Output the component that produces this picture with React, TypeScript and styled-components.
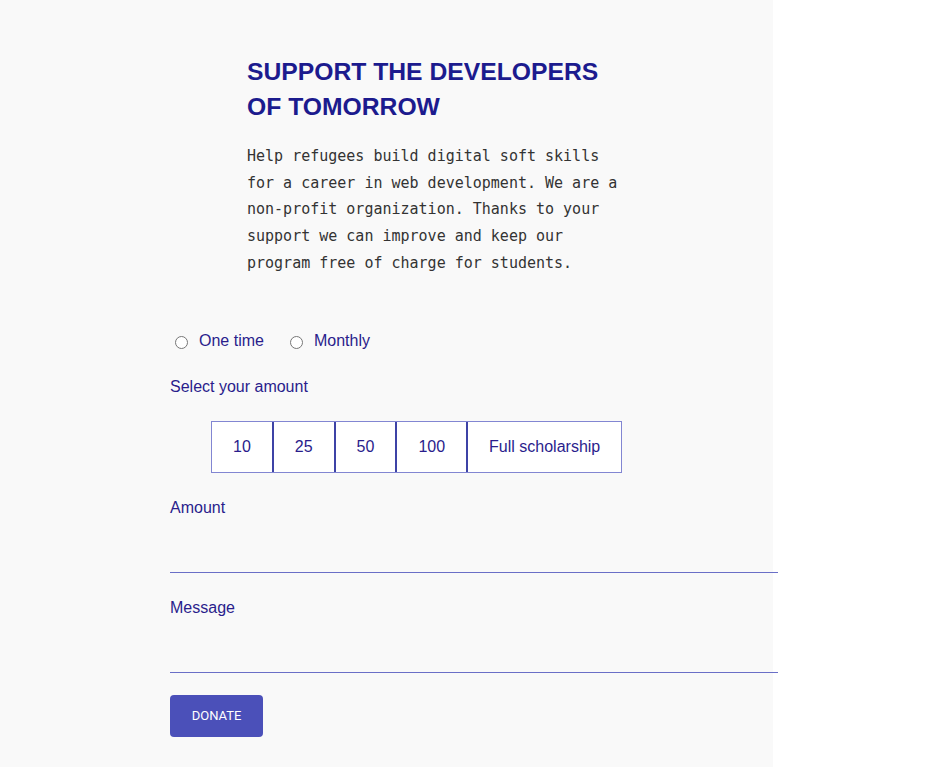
import { useState } from 'react';
import styled, { createGlobalStyle } from 'styled-components';

const AMOUNTS = ['10', '25', '50', '100', 'Full scholarship'];

const App: React.FC = () => {
  const [frequency, setFrequency] = useState('');
  const [formData, setFormData] = useState({ amount: '', message: '' });

  const handleOnChange = e => {
    setFormData({ ...formData, [e.target.id]: e.target.value });
  };

  const handleOnSubmit = e => {
    e.preventDefault();
  };

  return (
    <>
      <GlobalStyle />
      <StyledPanel>
        <StyledIntro>
          <StyledH1>SUPPORT THE DEVELOPERS OF TOMORROW</StyledH1>
          <StyledP>
            Help refugees build digital soft skills for a career in web
            development. We are a non-profit organization. Thanks to your
            support we can improve and keep our program free of charge for
            students.
          </StyledP>
        </StyledIntro>
        <StyledForm onSubmit={handleOnSubmit}>
          <StyledRadioRow>
            <StyledRadioLabel>
              <input
                type="radio"
                name="frequency"
                checked={frequency === 'once'}
                onChange={() => setFrequency('once')}
              />
              <span>One time</span>
            </StyledRadioLabel>
            <StyledRadioLabel>
              <input
                type="radio"
                name="frequency"
                checked={frequency === 'monthly'}
                onChange={() => setFrequency('monthly')}
              />
              <span>Monthly</span>
            </StyledRadioLabel>
          </StyledRadioRow>
          <StyledCaption>Select your amount</StyledCaption>
          <StyledAmountGroup>
            {AMOUNTS.map(a => (
              <StyledAmountButton
                key={a}
                type="button"
                onClick={() =>
                  setFormData({ ...formData, amount: /\d/.test(a) ? a : '' })
                }
              >
                {a}
              </StyledAmountButton>
            ))}
          </StyledAmountGroup>
          <StyledLabel htmlFor="amount">Amount</StyledLabel>
          <StyledInput
            id="amount"
            type="text"
            onChange={handleOnChange}
            value={formData.amount}
          />
          <StyledLabel htmlFor="message">Message</StyledLabel>
          <StyledInput
            id="message"
            type="text"
            onChange={handleOnChange}
            value={formData.message}
          />
          <StyledButton type="submit">Donate</StyledButton>
        </StyledForm>
      </StyledPanel>
    </>
  );
};

const GlobalStyle = createGlobalStyle`
  body {
    margin: 0;
    background: #ffffff;
    font-family: "Liberation Sans", Arial, sans-serif;
  }
`;

const StyledPanel = styled.main`
  width: 773px;
  min-height: 767px;
  box-sizing: border-box;
  background: #f9f9f9;
  padding: 54px 0 30px 170px;
`;

const StyledIntro = styled.section`
  width: 376px;
  margin-left: 77px;
`;

const StyledH1 = styled.h1`
  margin: 0;
  font-size: 24.7px;
  line-height: 35px;
  font-weight: 700;
  color: #1c1b8e;
`;

const StyledP = styled.p`
  margin: 19px 0 0 0;
  font-family: "DejaVu Sans Mono", "Liberation Mono", monospace;
  font-size: 15px;
  line-height: 26.7px;
  color: #333333;
`;

const StyledForm = styled.form`
  display: flex;
  flex-direction: column;
  align-items: flex-start;
  margin-top: 52px;
  width: 608px;
  color: #2a1d8c;
  font-size: 16px;
`;

const StyledRadioRow = styled.div`
  display: flex;
  align-items: center;
  height: 24px;
`;

const StyledRadioLabel = styled.label`
  display: flex;
  align-items: center;
  margin-right: 21px;

  input {
    margin: 3px 3px 0 5px;
    width: 13px;
    height: 13px;
  }

  span {
    margin-left: 8px;
  }
`;

const StyledCaption = styled.div`
  margin-top: 22px;
  line-height: 24px;
`;

const StyledAmountGroup = styled.div`
  display: flex;
  margin: 22px 0 0 41px;
  border: 1px solid #8286d2;
  background: #ffffff;
`;

const StyledAmountButton = styled.button`
  height: 50px;
  padding: 0 21px;
  border: 0;
  border-left: 2px solid #3e43a6;
  background: #ffffff;
  font-family: "Liberation Sans", Arial, sans-serif;
  font-size: 16px;
  color: #2a1d8c;
  cursor: pointer;

  &:first-child {
    border-left: 0;
  }
`;

const StyledLabel = styled.label`
  margin-top: 24px;
  line-height: 22px;
`;

const StyledInput = styled.input`
  width: 100%;
  height: 38px;
  margin-top: 16px;
  box-sizing: border-box;
  border: 0;
  border-bottom: 1px solid #6a6fc7;
  background: transparent;
  font-size: 16px;
  color: #2a1d8c;
  outline: 0;
`;

const StyledButton = styled.button`
  margin-top: 22px;
  width: 93px;
  height: 42px;
  border: 0;
  border-radius: 4px;
  background: #4b50b9;
  color: #ffffff;
  font-family: Roboto, "Liberation Sans", sans-serif;
  font-size: 13px;
  font-weight: 400;
  text-transform: uppercase;
  cursor: pointer;
`;

export default App;
